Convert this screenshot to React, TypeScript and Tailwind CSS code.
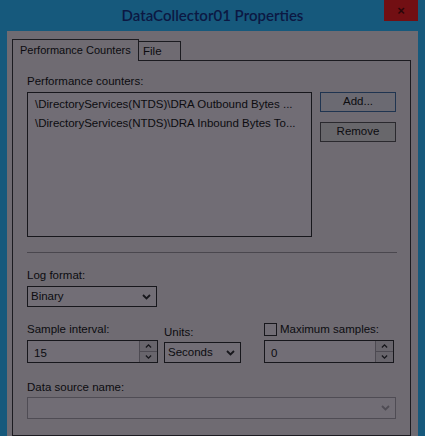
import React from "react";

const font = { fontFamily: '"Liberation Sans", Arial, sans-serif' };

function Chevron({ className = "" }: { className?: string }) {
  return (
    <svg width="9" height="6" viewBox="0 0 9 6" className={className}>
      <path d="M1 1l3.5 3.5L8 1" fill="none" stroke="currentColor" strokeWidth="1.8" />
    </svg>
  );
}

function Combo({ value, w }: { value: string; w: string }) {
  return (
    <div className={`flex h-[21px] items-center justify-between border border-[#17171c] bg-[#726e76] pl-[3px] pr-[5px] ${w}`}>
      <span>{value}</span>
      <Chevron className="text-[#17171c]" />
    </div>
  );
}

function Spinner({ value, w }: { value: string; w: string }) {
  return (
    <div className={`flex h-[23px] border border-[#17171c] bg-[#726e76] ${w}`}>
      <span className="flex-1 pl-[6px] pt-[4px]">{value}</span>
      <div className="flex w-[18px] flex-col border-l border-[#4d4a52]">
        <div className="flex flex-1 items-center justify-center border-b border-[#4d4a52] bg-[#68656c]">
          <Chevron className="rotate-180 scale-75 text-[#17171c]" />
        </div>
        <div className="flex flex-1 items-center justify-center bg-[#68656c]">
          <Chevron className="scale-75 text-[#17171c]" />
        </div>
      </div>
    </div>
  );
}

export default function App() {
  return (
    <div className="flex h-[436px] w-[425px] flex-col overflow-hidden bg-[#16597c]" style={font}>
      <div className="relative flex h-[31px] shrink-0 items-center justify-center">
        <span className="text-[15px] font-semibold text-[#0c1843]" style={{ fontFamily: "Lato, sans-serif" }}>
          DataCollector01 Properties
        </span>
        <div className="absolute right-[7px] top-0 flex h-[21px] w-[34px] items-center justify-center bg-[#720f13]">
          <span className="text-[13px] font-bold text-[#2a0608]">×</span>
        </div>
      </div>
      <div className="mx-[7px] flex flex-1 flex-col bg-[#6f6b72] pl-[5px] pr-[7px] pt-[8px] text-[11.5px] text-[#0c0c10]">
        <div className="flex h-[21px] items-end whitespace-nowrap">
          <div className="relative z-10 -mb-px flex h-[22px] w-[127px] items-center border border-b-0 border-[#1b1b20] bg-[#6f6b72] pl-[7px] text-[11px]">
            Performance Counters
          </div>
          <div className="flex h-[19px] w-[42px] items-center border border-b-0 border-l-0 border-[#1b1b20] pl-[4px] pt-[2px]">
            File
          </div>
        </div>
        <div className="flex flex-1 flex-col border border-[#1b1b20] pl-[14px] pr-[14px] pt-[13px] whitespace-nowrap">
          <div className="leading-[15px]">Performance counters:</div>
          <div className="mt-[3px] flex gap-[8px]">
            <div className="h-[145px] w-[285px] border border-[#17171c] bg-[#716d75] px-[7px] pt-[2px] leading-[19px]">
              <div>\DirectoryServices(NTDS)\DRA Outbound Bytes ...</div>
              <div>\DirectoryServices(NTDS)\DRA Inbound Bytes To...</div>
            </div>
            <div className="flex flex-col gap-[10px]">
              <div className="flex h-[20px] w-[76px] items-center justify-center border border-[#1f3450] bg-[#6b6a72]">
                Add...
              </div>
              <div className="flex h-[20px] w-[76px] items-center justify-center border border-[#2a292e] bg-[#68676b]">
                Remove
              </div>
            </div>
          </div>
          <div className="mt-[15px] h-px w-[370px] bg-[#4a474e]" />
          <div className="mt-[15px] leading-[15px]">Log format:</div>
          <div className="mt-[3px]">
            <Combo value="Binary" w="w-[130px]" />
          </div>
          <div className="mt-[15px] flex items-start">
            <div className="w-[131px]">
              <div className="leading-[15px]">Sample interval:</div>
              <div className="mt-[3px]">
                <Spinner value="15" w="w-[131px]" />
              </div>
            </div>
            <div className="ml-[6px] w-[77px]">
              <div className="pt-[3px] leading-[15px]">Units:</div>
              <div className="mt-[2px]">
                <Combo value="Seconds" w="w-[77px]" />
              </div>
            </div>
            <div className="ml-[23px] w-[130px]">
              <div className="flex h-[15px] items-center gap-[3px]">
                <div className="h-[13px] w-[13px] shrink-0 border border-[#17171c] bg-[#716d75]" />
                <span className="leading-[15px]">Maximum samples:</span>
              </div>
              <div className="mt-[3px]">
                <Spinner value="0" w="w-[130px]" />
              </div>
            </div>
          </div>
          <div className="mt-[17px] leading-[15px]">Data source name:</div>
          <div className="mt-[2px] flex h-[22px] w-[369px] items-center justify-end border border-[#4f4c54] bg-[#716d75] pr-[5px]">
            <Chevron className="text-[#4f4c54]" />
          </div>
        </div>
      </div>
    </div>
  );
}
